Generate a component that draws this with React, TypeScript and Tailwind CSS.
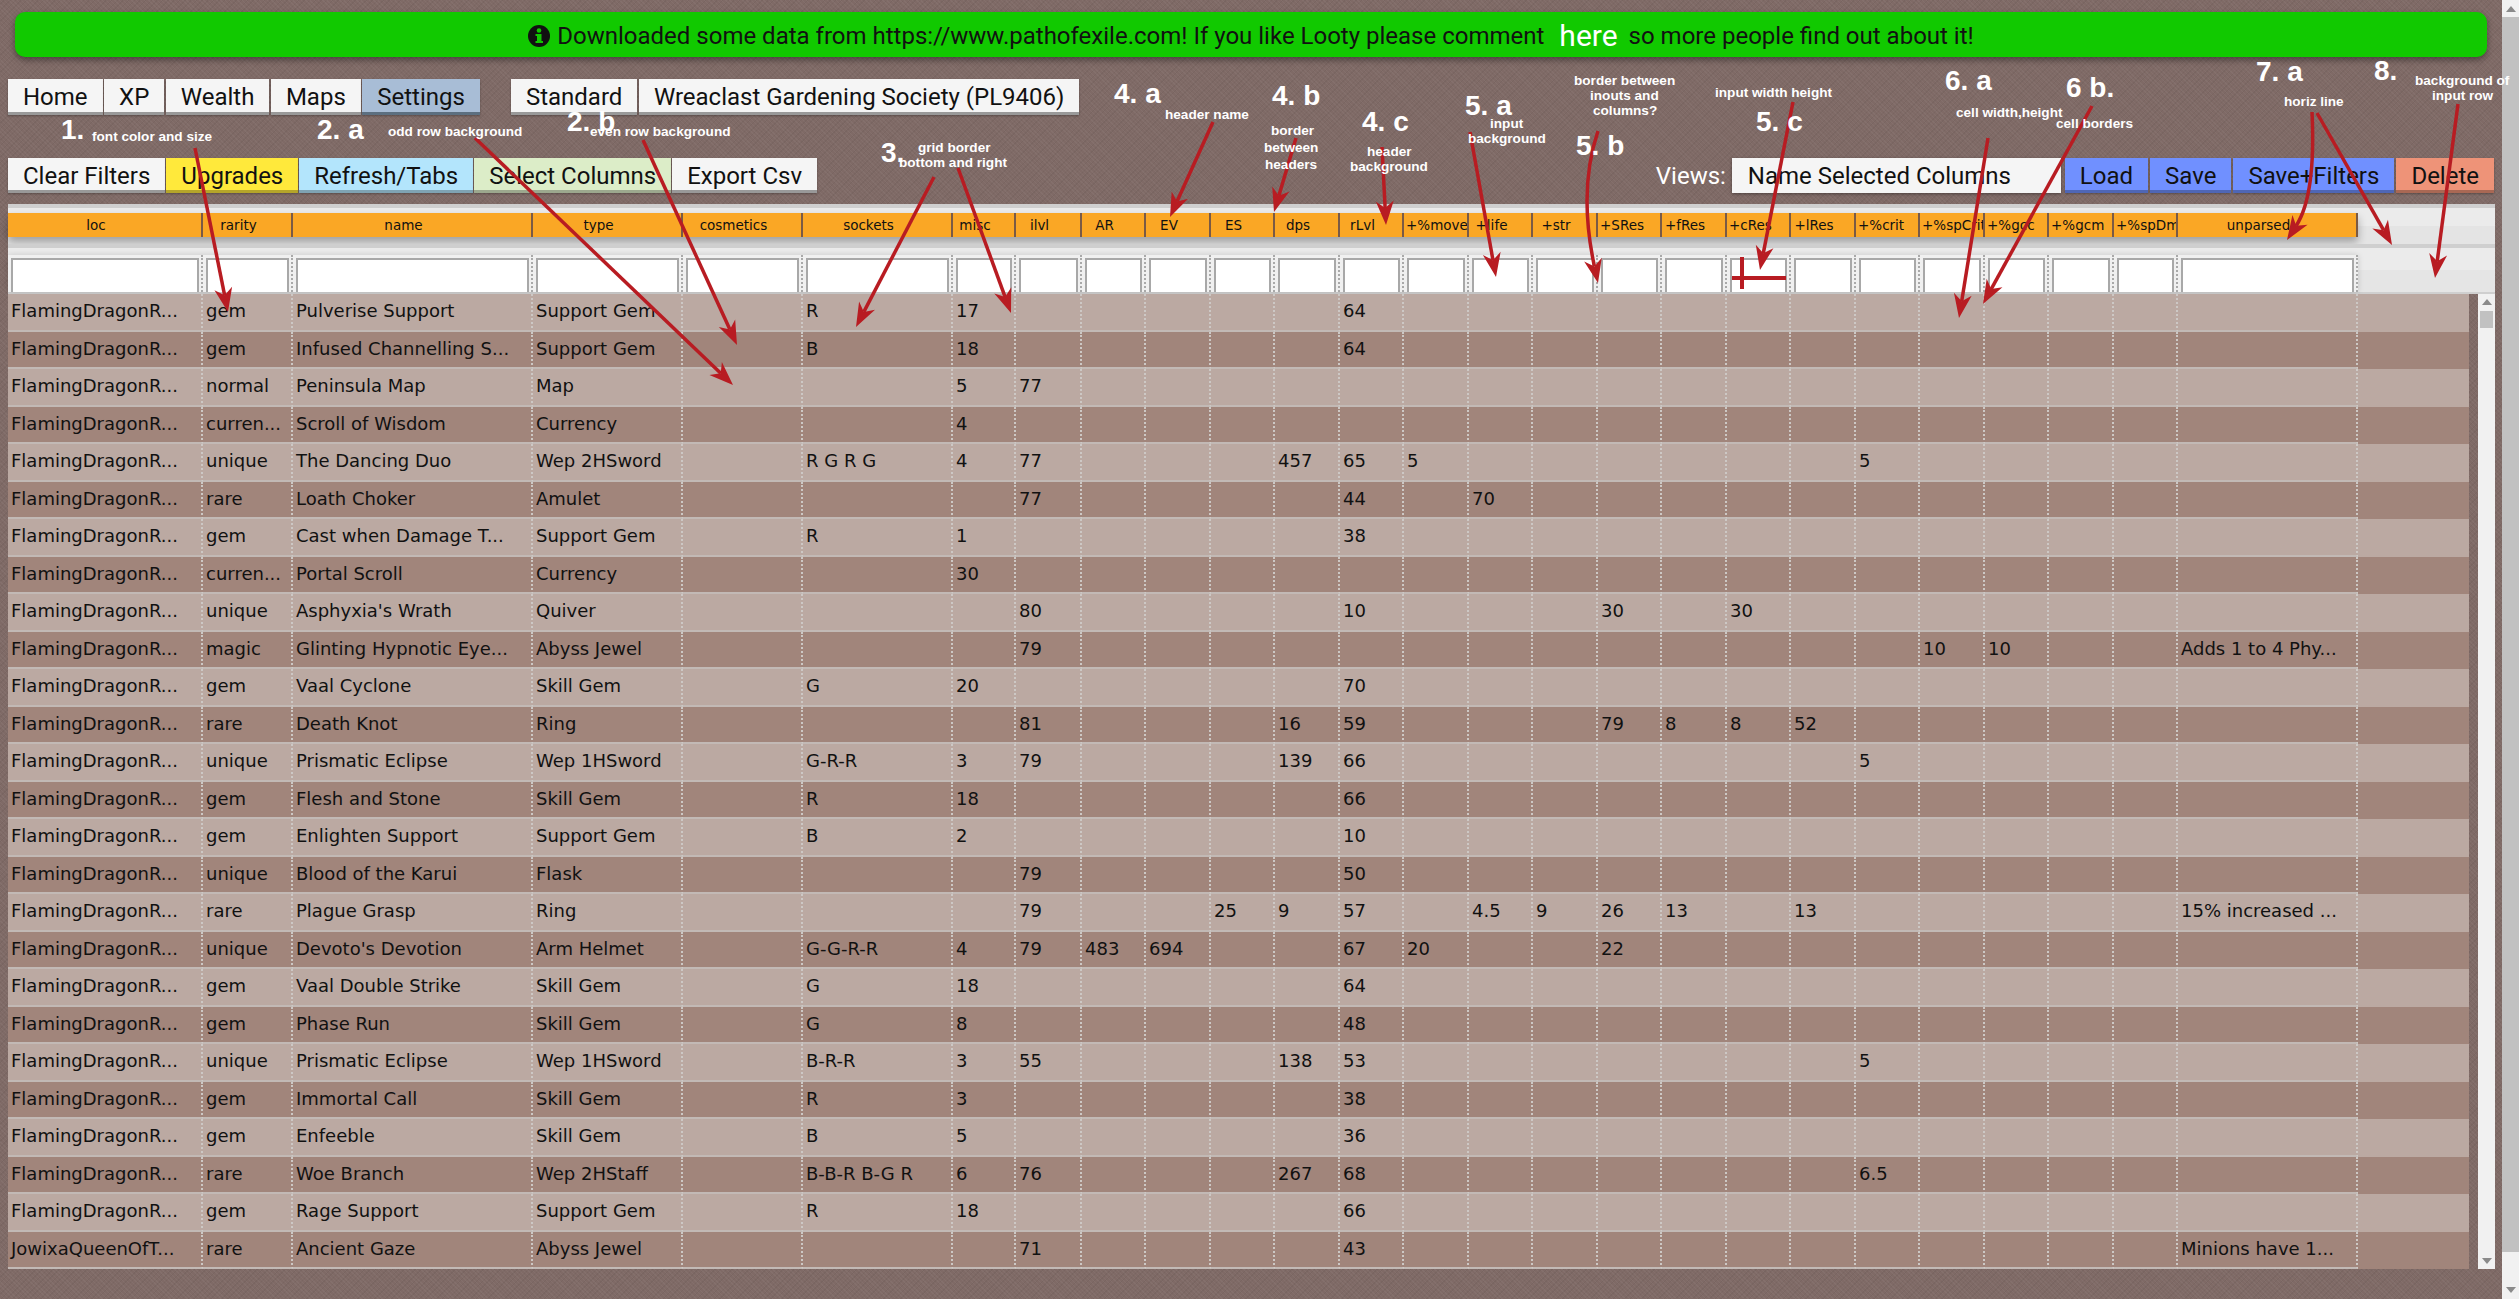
import type { ReactNode } from 'react';

const GRID_COLS =
  'grid grid-cols-[195px_90px_240px_150px_120px_150px_63px_66px_64px_65px_64px_65px_64px_65px_64px_65px_64px_65px_64px_65px_64px_65px_64px_65px_64px_180px]';

const COLUMNS = [
  'loc', 'rarity', 'name', 'type', 'cosmetics', 'sockets', 'misc', 'ilvl', 'AR', 'EV', 'ES', 'dps', 'rLvl',
  '+%move', '+life', '+str', '+SRes', '+fRes', '+cRes', '+lRes', '+%crit', '+%spCrit', '+%gcc', '+%gcm', '+%spDm', 'unparsed',
];

const FD = 'FlamingDragonR...';

type Row = Record<string, string>;

const ROWS: Row[] = [
  { loc: FD, rarity: 'gem', name: 'Pulverise Support', type: 'Support Gem', sockets: 'R', misc: '17', rLvl: '64' },
  { loc: FD, rarity: 'gem', name: 'Infused Channelling S...', type: 'Support Gem', sockets: 'B', misc: '18', rLvl: '64' },
  { loc: FD, rarity: 'normal', name: 'Peninsula Map', type: 'Map', misc: '5', ilvl: '77' },
  { loc: FD, rarity: 'curren...', name: 'Scroll of Wisdom', type: 'Currency', misc: '4' },
  { loc: FD, rarity: 'unique', name: 'The Dancing Duo', type: 'Wep 2HSword', sockets: 'R G R G', misc: '4', ilvl: '77', dps: '457', rLvl: '65', '+%move': '5', '+%crit': '5' },
  { loc: FD, rarity: 'rare', name: 'Loath Choker', type: 'Amulet', ilvl: '77', rLvl: '44', '+life': '70' },
  { loc: FD, rarity: 'gem', name: 'Cast when Damage T...', type: 'Support Gem', sockets: 'R', misc: '1', rLvl: '38' },
  { loc: FD, rarity: 'curren...', name: 'Portal Scroll', type: 'Currency', misc: '30' },
  { loc: FD, rarity: 'unique', name: "Asphyxia's Wrath", type: 'Quiver', ilvl: '80', rLvl: '10', '+SRes': '30', '+cRes': '30' },
  { loc: FD, rarity: 'magic', name: 'Glinting Hypnotic Eye...', type: 'Abyss Jewel', ilvl: '79', '+%spCrit': '10', '+%gcc': '10', unparsed: 'Adds 1 to 4 Phy...' },
  { loc: FD, rarity: 'gem', name: 'Vaal Cyclone', type: 'Skill Gem', sockets: 'G', misc: '20', rLvl: '70' },
  { loc: FD, rarity: 'rare', name: 'Death Knot', type: 'Ring', ilvl: '81', dps: '16', rLvl: '59', '+SRes': '79', '+fRes': '8', '+cRes': '8', '+lRes': '52' },
  { loc: FD, rarity: 'unique', name: 'Prismatic Eclipse', type: 'Wep 1HSword', sockets: 'G-R-R', misc: '3', ilvl: '79', dps: '139', rLvl: '66', '+%crit': '5' },
  { loc: FD, rarity: 'gem', name: 'Flesh and Stone', type: 'Skill Gem', sockets: 'R', misc: '18', rLvl: '66' },
  { loc: FD, rarity: 'gem', name: 'Enlighten Support', type: 'Support Gem', sockets: 'B', misc: '2', rLvl: '10' },
  { loc: FD, rarity: 'unique', name: 'Blood of the Karui', type: 'Flask', ilvl: '79', rLvl: '50' },
  { loc: FD, rarity: 'rare', name: 'Plague Grasp', type: 'Ring', ilvl: '79', ES: '25', dps: '9', rLvl: '57', '+life': '4.5', '+str': '9', '+SRes': '26', '+fRes': '13', '+lRes': '13', unparsed: '15% increased ...' },
  { loc: FD, rarity: 'unique', name: "Devoto's Devotion", type: 'Arm Helmet', sockets: 'G-G-R-R', misc: '4', ilvl: '79', AR: '483', EV: '694', rLvl: '67', '+%move': '20', '+SRes': '22' },
  { loc: FD, rarity: 'gem', name: 'Vaal Double Strike', type: 'Skill Gem', sockets: 'G', misc: '18', rLvl: '64' },
  { loc: FD, rarity: 'gem', name: 'Phase Run', type: 'Skill Gem', sockets: 'G', misc: '8', rLvl: '48' },
  { loc: FD, rarity: 'unique', name: 'Prismatic Eclipse', type: 'Wep 1HSword', sockets: 'B-R-R', misc: '3', ilvl: '55', dps: '138', rLvl: '53', '+%crit': '5' },
  { loc: FD, rarity: 'gem', name: 'Immortal Call', type: 'Skill Gem', sockets: 'R', misc: '3', rLvl: '38' },
  { loc: FD, rarity: 'gem', name: 'Enfeeble', type: 'Skill Gem', sockets: 'B', misc: '5', rLvl: '36' },
  { loc: FD, rarity: 'rare', name: 'Woe Branch', type: 'Wep 2HStaff', sockets: 'B-B-R B-G R', misc: '6', ilvl: '76', dps: '267', rLvl: '68', '+%crit': '6.5' },
  { loc: FD, rarity: 'gem', name: 'Rage Support', type: 'Support Gem', sockets: 'R', misc: '18', rLvl: '66' },
  { loc: 'JowixaQueenOfT...', rarity: 'rare', name: 'Ancient Gaze', type: 'Abyss Jewel', ilvl: '71', rLvl: '43', unparsed: 'Minions have 1...' },
];

// annotation labels: [text, left, centre y]
const BIG_LABELS: [string, number, number][] = [
  ['1.', 61, 130], ['2. a', 317, 130], ['2. b', 567, 122], ['3.', 881, 153], ['4. a', 1114, 94], ['4. b', 1272, 96],
  ['4. c', 1362, 122], ['5. a', 1465, 106], ['5. b', 1576, 146], ['5. c', 1756, 122], ['6. a', 1945, 81], ['6 b.', 2066, 88],
  ['7. a', 2256, 72], ['8.', 2374, 71],
];

const SMALL_LABELS: [string, number, number][] = [
  ['font color and size', 92, 137], ['odd row background', 388, 132], ['even row background', 590, 132],
  ['grid border', 918, 148], ['bottom and right', 899, 163], ['header name', 1165, 115],
  ['border', 1271, 131], ['between', 1264, 148], ['headers', 1265, 165], ['header', 1367, 152], ['background', 1350, 167],
  ['input', 1490, 124], ['background', 1468, 139], ['border between', 1574, 81], ['inouts and', 1590, 96], ['columns?', 1593, 111],
  ['input width height', 1715, 93], ['cell width,height', 1956, 113], ['cell borders', 2056, 124], ['horiz line', 2284, 102],
  ['background of', 2415, 81], ['input row', 2432, 96],
];

// arrows: start, optional control point, tip
const ARROWS: { from: [number, number]; via?: [number, number]; to: [number, number] }[] = [
  { from: [195, 148], to: [228, 312] },
  { from: [475, 138], to: [733, 385] },
  { from: [643, 140], to: [737, 345] },
  { from: [934, 177], to: [856, 327] },
  { from: [958, 168], to: [1011, 313] },
  { from: [1213, 122], to: [1170, 217] },
  { from: [1296, 138], to: [1274, 212] },
  { from: [1382, 147], to: [1386, 225] },
  { from: [1470, 132], to: [1496, 277] },
  { from: [1598, 131], via: [1578, 190], to: [1598, 283] },
  { from: [1793, 102], to: [1760, 270] },
  { from: [1988, 138], to: [1959, 318] },
  { from: [2092, 106], to: [1983, 304] },
  { from: [2312, 112], via: [2316, 195], to: [2287, 240] },
  { from: [2317, 113], to: [2392, 245] },
  { from: [2458, 104], to: [2435, 278] },
];

function NavButton({ className, children }: { className: string; children: ReactNode }) {
  return (
    <button className={`h-full px-[15px] border-b-[3px] shadow-[0_1px_2px_rgba(0,0,0,0.3)] whitespace-nowrap ${className}`}>{children}</button>
  );
}

function Triangle({ dir }: { dir: 'up' | 'down' }) {
  return (
    <svg width="10" height="6" viewBox="0 0 10 6" className="fill-[#8a8a8a]">
      <path d={dir === 'up' ? 'M5 0 L10 6 L0 6 Z' : 'M0 0 L10 0 L5 6 Z'} />
    </svg>
  );
}

function Arrow({ from, via, to }: { from: [number, number]; via?: [number, number]; to: [number, number] }) {
  const ctrl = via ?? from;
  const len = Math.hypot(to[0] - ctrl[0], to[1] - ctrl[1]);
  const ux = (to[0] - ctrl[0]) / len;
  const uy = (to[1] - ctrl[1]) / len;
  const baseX = to[0] - ux * 24;
  const baseY = to[1] - uy * 24;
  const neckX = to[0] - ux * 17;
  const neckY = to[1] - uy * 17;
  const head = `${to[0]},${to[1]} ${baseX - uy * 9},${baseY + ux * 9} ${neckX},${neckY} ${baseX + uy * 9},${baseY - ux * 9}`;
  const line = via ? `M${from[0]} ${from[1]} Q${via[0]} ${via[1]} ${neckX} ${neckY}` : `M${from[0]} ${from[1]} L${neckX} ${neckY}`;
  return (
    <g>
      <path d={line} fill="none" stroke="#b81c22" strokeWidth="3.5" />
      <polygon points={head} fill="#b81c22" />
    </g>
  );
}

function Annotations() {
  return (
    <div className="absolute inset-0 pointer-events-none font-['Liberation_Sans',sans-serif] font-bold text-white">
      <svg width="2519" height="1299" className="absolute left-0 top-0">
        {ARROWS.map((a, i) => (
          <Arrow key={i} {...a} />
        ))}
        <path d="M1742 257 L1742 289 M1732 278 L1786 278" stroke="#b81c22" strokeWidth="4" fill="none" />
      </svg>
      {BIG_LABELS.map(([t, x, y]) => (
        <span key={t} className="absolute text-[28px] leading-[32px] whitespace-nowrap" style={{ left: x, top: y - 16 }}>
          {t}
        </span>
      ))}
      {SMALL_LABELS.map(([t, x, y]) => (
        <span key={t + x} className="absolute text-[13.6px] leading-[16px] whitespace-nowrap" style={{ left: x, top: y - 8 }}>
          {t}
        </span>
      ))}
    </div>
  );
}

function Grid() {
  return (
    <div className="mr-[7px] flex flex-col font-['DejaVu_Sans',sans-serif] text-[#111]">
      {/* header */}
      <div className="border-t-4 border-[#cfcfcf] h-[40px] pt-[5px] bg-[linear-gradient(#ebebeb_50%,#e4e4e4_50%)]">
        <div className={`${GRID_COLS} w-[2350px] h-[24px] bg-[#faa725] shadow-[0_5px_8px_rgba(0,0,0,0.3)]`}>
          {COLUMNS.map((c) => (
            <div key={c} className="pl-[2px] pr-[19px] text-center leading-[24px] overflow-hidden whitespace-nowrap text-[13.5px] border-r-2 border-[#7a5a45]">
              {c}
            </div>
          ))}
        </div>
      </div>
      {/* filter inputs */}
      <div className="border-t-4 border-b-2 border-[#cfcfcf] h-[50px] pt-[7px] bg-[linear-gradient(#ebebeb_50%,#e5e5e5_50%)]">
        <div className={`${GRID_COLS} w-[2350px] h-[37px] bg-[#f0f0f0] shadow-[0_0_6px_rgba(0,0,0,0.15)]`}>
          {COLUMNS.map((c) => (
            <div key={c} className="pl-[3px] pr-[2px] pt-[3px] border-r-2 border-dotted border-[#a9a9a9]">
              <input className="block w-full h-full bg-white border-2 border-b-0 border-[#a8a8a8] outline-none" />
            </div>
          ))}
        </div>
      </div>
      {/* rows and grid scrollbar */}
      <div className="flex justify-between">
        <div className="w-[2461px]">
          {ROWS.map((row, i) => (
            <div key={i} className={`h-[37.5px] ${i % 2 === 0 ? 'bg-[#bba9a2]' : 'bg-[#a1857b]'}`}>
              <div className={`${GRID_COLS} w-[2350px] h-full`}>
                {COLUMNS.map((c) => (
                  <div key={c} className="flex items-center pl-[3px] pb-[2px] overflow-hidden whitespace-nowrap text-[18px] border-b-2 border-r-2 border-b-[#c2b9b5] border-r-[#cdc8c5] [border-right-style:dotted]">
                    {row[c]}
                  </div>
                ))}
              </div>
            </div>
          ))}
        </div>
        <div className="w-[17px] bg-[#f1f1f1] flex flex-col items-center justify-between py-[5px] relative">
          <Triangle dir="up" />
          <div className="absolute left-[2px] top-[17px] w-[13px] h-[17px] bg-[#c1c1c1]" />
          <Triangle dir="down" />
        </div>
      </div>
    </div>
  );
}

export default function App() {
  return (
    <div className="relative flex w-[2519px] h-[1299px] overflow-hidden bg-[#7f6a66] bg-[image:repeating-linear-gradient(45deg,rgba(255,255,255,0.04)_0_1px,transparent_1px_3px),repeating-linear-gradient(-45deg,rgba(0,0,0,0.05)_0_1px,transparent_1px_4px)] font-['Roboto',sans-serif] text-[24px] text-[#111]">
      <main className="w-[2502px] pl-[8px] pt-[12px]">
        <div className="ml-[7px] mr-[15px] h-[45px] pt-[2px] flex items-center justify-center rounded-[10px] bg-[#11c900] shadow-[0_3px_6px_rgba(0,0,0,0.4)]">
          <svg width="22" height="22" viewBox="0 0 22 22" className="mr-[7px]">
            <circle cx="11" cy="11" r="11" fill="#111" />
            <rect x="9" y="9" width="4.5" height="9" fill="#11c900" />
            <rect x="7.5" y="9" width="3" height="2" fill="#11c900" />
            <rect x="7.5" y="16" width="7.5" height="2" fill="#11c900" />
            <circle cx="11" cy="5.5" r="2.3" fill="#11c900" />
          </svg>
          <span>Downloaded some data from https://www.pathofexile.com! If you like Looty please comment</span>
          <span className="ml-[15px] mr-[11px] text-[30px] text-white">here</span>
          <span>so more people find out about it!</span>
        </div>

        <nav className="mt-[22px] h-[36px] flex">
          <div className="flex gap-[1.5px]">
            <NavButton className="bg-[#f5f5f5] border-[#999]">Home</NavButton>
            <NavButton className="bg-[#f5f5f5] border-[#999]">XP</NavButton>
            <NavButton className="bg-[#f5f5f5] border-[#999]">Wealth</NavButton>
            <NavButton className="bg-[#f5f5f5] border-[#999]">Maps</NavButton>
            <NavButton className="bg-[#a8bdd6] border-[#5c6f80]">Settings</NavButton>
          </div>
          <div className="ml-[31px] flex gap-[1.5px]">
            <NavButton className="bg-[#f5f5f5] border-[#999]">Standard</NavButton>
            <NavButton className="bg-[#f5f5f5] border-[#999]">Wreaclast Gardening Society (PL9406)</NavButton>
          </div>
        </nav>

        <div className="mt-[43px] h-[35px] pr-[8px] flex justify-between">
          <div className="flex gap-[1px]">
            <NavButton className="bg-[#f5f5f5] border-[#999]">Clear Filters</NavButton>
            <NavButton className="bg-[#ffe93b] border-[#b5a52a]">Upgrades</NavButton>
            <NavButton className="bg-[#b3e5fc] border-[#7fa3b3]">Refresh/Tabs</NavButton>
            <NavButton className="bg-[#dcedc8] border-[#9ca88e]">Select Columns</NavButton>
            <NavButton className="bg-[#f5f5f5] border-[#999]">Export Csv</NavButton>
          </div>
          <div className="flex items-center">
            <span className="mr-[6px] text-white">Views:</span>
            <div className="w-[329px] h-full pl-[16px] flex items-center bg-[#f5f5f5] shadow-[0_1px_3px_rgba(0,0,0,0.4)]">Name Selected Columns</div>
            <div className="ml-[4px] h-full flex gap-[2px]">
              <NavButton className="bg-[#7090ff] border-[#4f66b5]">Load</NavButton>
              <NavButton className="bg-[#7090ff] border-[#4f66b5]">Save</NavButton>
              <NavButton className="bg-[#7090ff] border-[#4f66b5]">Save+Filters</NavButton>
              <NavButton className="bg-[#ee9378] border-[#a96854]">Delete</NavButton>
            </div>
          </div>
        </div>

        <div className="mt-[11px]">
          <Grid />
        </div>
      </main>

      {/* page scrollbar */}
      <aside className="w-[17px] h-full bg-[#f1f1f1] flex flex-col items-center justify-between py-[6px] relative">
        <Triangle dir="up" />
        <div className="absolute left-0 top-[17px] w-[17px] h-[1235px] bg-[#c1c1c1]" />
        <Triangle dir="down" />
      </aside>

      <Annotations />
    </div>
  );
}
